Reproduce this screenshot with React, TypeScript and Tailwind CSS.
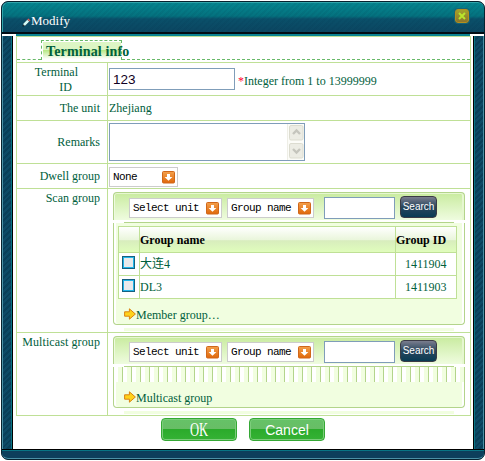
import type { ReactNode } from "react";

const serif = "font-['Liberation_Serif','Noto_Sans_CJK_SC',serif]";

function Pencil() {
  return (
    <svg className="mt-[15px] h-[9px] w-[9px] shrink-0" viewBox="0 0 9 9">
      <path d="M1 8 L1.4 5.4 L5.2 1.6 L7.4 3.6 L3.6 7.4 Z" fill="#d4fbf6" stroke="#123" strokeWidth=".4" />
      <path d="M5.4 1.5 L6.4 .5 L8.5 2.5 L7.5 3.5 Z" fill="#e0605a" />
      <path d="M.6 8.4 L1 6.8 L2.3 8 Z" fill="#111" />
    </svg>
  );
}

function DropIcon() {
  return (
    <svg className="h-[13px] w-[13px] shrink-0" viewBox="0 0 13 13">
      <defs>
        <linearGradient id="drop" x1="0" y1="0" x2="0" y2="1">
          <stop offset="0" stopColor="#f3a04c" />
          <stop offset="1" stopColor="#e0680a" />
        </linearGradient>
      </defs>
      <rect x=".5" y=".5" width="12" height="11.5" rx="1" fill="url(#drop)" stroke="#d0671a" />
      <path d="M5 3h3v3h2.4L6.5 9.8 2.6 6H5z" fill="#fff" />
    </svg>
  );
}

function GoArrow() {
  return (
    <svg className="h-[12px] w-[12px] shrink-0" viewBox="0 0 12 12">
      <path d="M.6 3.8H5.4V.8L11.4 6 5.4 11.2V8.2H.6z" fill="#ffd21c" stroke="#d98213" strokeWidth="1" />
    </svg>
  );
}

function Select({ label, width }: { label: string; width: string }) {
  return (
    <div className={`flex h-[20px] items-center justify-between border border-[#ccc] bg-white pr-[2px] pl-[3px] ${width}`}>
      <span className="font-['Liberation_Mono',monospace] text-[11px] leading-[18px] tracking-[-0.6px] whitespace-pre text-black">{label}</span>
      <DropIcon />
    </div>
  );
}

function Row({ label, height, children, labelClass = "" }: { label: ReactNode; height: string; children: ReactNode; labelClass?: string }) {
  return (
    <div className={`flex border-b border-[#bfe096] ${height}`}>
      <div className={`w-[91px] shrink-0 border-r border-[#bfe096] pr-[7px] text-right leading-[14px] whitespace-nowrap ${labelClass}`}>{label}</div>
      <div className="min-w-0 flex-1">{children}</div>
    </div>
  );
}

function Filter() {
  return (
    <div className="flex h-[28px] rounded-t-[4px] border border-b-0 border-[#b3d48b] bg-linear-to-b from-[#c9eb9f] to-[#effcdf] pl-[15px] shadow-[inset_0_1px_0_#e6f7d0,inset_1px_0_0_#eefadf,inset_-2px_0_0_#e6f7d0]">
      <div className="mt-[5px] flex">
        <Select label="Select unit" width="w-[93px]" />
        <div className="w-[5px]" />
        <Select label="Group name" width="w-[87px]" />
      </div>
      <div className="mt-[4px] ml-[10px] h-[22px] w-[71px] border border-[#7f9db9] bg-white" />
      <div className="mt-[3px] ml-[5px] h-[22px] w-[37px] rounded-[4px] border border-[#3b3b45] bg-linear-to-b from-[#7a7d8e] via-[#27465c] to-[#073b54] text-center font-['Liberation_Sans',sans-serif] text-[10px] leading-[19px] text-white">
        Search
      </div>
    </div>
  );
}

function MoreLink({ children }: { children: ReactNode }) {
  return (
    <div className="flex">
      <GoArrow />
      <span className="leading-[14px]">{children}</span>
    </div>
  );
}

function GroupRow({ name, id }: { name: string; id: string }) {
  return (
    <div className="flex h-[23px] border-b border-[#bfe096] bg-white">
      <div className="w-[21px] border-r border-[#bfe096] pt-[3px] pl-[3px]">
        <div className="h-[13px] w-[13px] border border-[#17607f] bg-[#e9e9eb] shadow-[inset_0_0_0_1px_#22b5ea]" />
      </div>
      <div className="w-[256px] border-r border-[#bfe096] pt-[4px] leading-[14px]">{name}</div>
      <div className="flex-1 pt-[4px] pl-[9px] leading-[14px]">{id}</div>
    </div>
  );
}

function GreenButton({ children }: { children: ReactNode }) {
  return (
    <div className="flex h-[23px] w-[76px] items-center justify-center rounded-[4px] border border-[#35a835] bg-[linear-gradient(#65c267_0%,#68bd66_48%,#2bab2b_50%,#35b235_100%)] text-white shadow-[inset_0_0_0_1px_#7ccd7b]">
      {children}
    </div>
  );
}

export default function App() {
  return (
    <div className={`h-[461px] w-[485px] overflow-hidden bg-white pt-px pl-px text-[12px] text-[#00603c] ${serif}`}>
      <div className="h-[459px] w-[484px] overflow-hidden rounded-[7px] border border-[#07222f] bg-[#0d4560]">
        <div className="flex h-[30px] rounded-t-[6px] border-t border-l border-[#31a5ab] bg-[repeating-linear-gradient(135deg,#0000_0_2px,#00264012_2px_4px),linear-gradient(#05858f_0%,#04717e_45%,#0a506a_55%,#0b4661_100%)] pl-[19px]">
          <Pencil />
          <span className="mt-[10px] text-[13px] leading-[16px] text-white">Modify</span>
          <div className="mt-[6px] ml-auto mr-[15px] flex h-[14px] w-[14px] items-center justify-center rounded-[3px] border border-[#b58f1e] bg-linear-to-b from-[#a3a32a] to-[#8b752d] shadow-[0_0_0_1px_#176375]">
            <svg width="8" height="8" viewBox="0 0 8 8" stroke="#b9e52c" strokeWidth="2">
              <path d="M1 1 7 7M7 1 1 7" />
            </svg>
          </div>
        </div>
        <div className="h-[2px] bg-[#020c14]" />
        <div className="flex h-[2px]">
          <div className="w-[14px] bg-white" />
          <div className="flex-1 bg-[#098391]" />
          <div className="w-[14px] bg-white" />
        </div>
        <div className="flex h-[413px]">
          <div className="w-[10px] border-r border-l border-r-[#087584] border-l-[#4b91a6] bg-[repeating-linear-gradient(135deg,#0d4a66_0_2px,#093f59_2px_4px)]" />
          <div className="w-px bg-black" />
          <div className="w-[460px] bg-white">
            <div className="ml-[3px] w-[455px] border border-b-0 border-[#bfe096]">
              <div className="flex h-[26px] border-b border-[#bfe096]">
                <div className="mt-[3px] h-[20px] w-[24px] border-b border-dashed border-[#68b968]" />
                <div className="mt-[3px] h-[20px] w-[81px] border border-b-0 border-dashed border-[#68b968] bg-[linear-gradient(#ddf6c5_0%,#dcf5c4_45%,#b9e888_50%,#fff_95%)] bg-clip-content pt-px pl-px">
                  <div className="h-[18px] pt-px pl-[3px] text-[14px] leading-[18px] font-bold tracking-[0.15px] whitespace-nowrap">Terminal info</div>
                </div>
                <div className="mt-[3px] h-[20px] flex-1 border-b border-dashed border-[#68b968]" />
              </div>
              <Row
                height="h-[33px]"
                labelClass="pt-[2px]"
                label={
                  <>
                    <div className="pr-[22px]">Terminal</div>
                    <div className="mt-[1px] pr-[28px]">ID</div>
                  </>
                }
              >
                <div className="flex pt-[5px] pl-px">
                  <div className="h-[22px] w-[126px] border border-[#7f9db9] bg-white pl-[3px] font-['Liberation_Sans',sans-serif] text-[13.5px] leading-[21px] text-[#102]">123</div>
                  <span className="mt-[6px] ml-[3px] leading-[14px]">
                    <span className="text-[#f03]">*</span>Integer from 1 to 13999999
                  </span>
                </div>
              </Row>
              <Row height="h-[25px]" labelClass="pt-[5px]" label="The unit">
                <div className="pt-[5px] pl-px leading-[14px]">Zhejiang</div>
              </Row>
              <Row height="h-[43px]" labelClass="pt-[14px]" label="Remarks">
                <div className="mt-[2px] ml-px flex h-[38px] w-[196px] justify-end border border-[#7f9db9] bg-white">
                  <div className="flex w-[17px] flex-col items-center justify-between border-l border-[#eeeee6] bg-[#fcfcf8] py-px">
                    {["M4 9 7.5 5.5 11 9", "M4 6 7.5 9.5 11 6"].map((d) => (
                      <svg key={d} width="15" height="16" viewBox="0 0 15 16">
                        <rect x=".5" y=".5" width="13.5" height="14.5" rx="1.5" fill="#ecece4" stroke="#dcdcd0" />
                        <path d={d} fill="none" stroke="#c5c5bd" strokeWidth="2.4" />
                      </svg>
                    ))}
                  </div>
                </div>
              </Row>
              <Row height="h-[25px]" labelClass="pt-[5px]" label="Dwell group">
                <div className="pt-[3px] pl-px">
                  <Select label="None" width="w-[69px]" />
                </div>
              </Row>
              <Row height="h-[144px]" labelClass="pt-[2px]" label="Scan group">
                <div className="mt-[3px] ml-[5px] w-[352px]">
                  <Filter />
                  <div className="mx-[11px] mt-[2px] h-px bg-[#b3d48b]" />
                  <div className="h-[102px] rounded-b-[4px] border border-t-0 border-[#b3d48b] bg-[#f1fee0] px-[4px] pt-[3px] shadow-[inset_2px_0_0_#fff,inset_-2px_0_0_#fff]">
                    <div className="w-[339px] border border-b-0 border-[#bfe096]">
                      <div className="flex h-[26px] border-b border-[#bfe096] bg-[linear-gradient(#fff_0%,#eaf6dc_50%,#d8edbd_55%,#e0fdbc_100%)] leading-[14px] font-bold text-black">
                        <div className="w-[21px] border-r border-[#bfe096]" />
                        <div className="w-[256px] border-r border-[#bfe096] pt-[6px]">Group name</div>
                        <div className="pt-[6px]">Group ID</div>
                      </div>
                      <GroupRow name="大连4" id="1411904" />
                      <GroupRow name="DL3" id="1411903" />
                    </div>
                    <div className="mt-[9px] ml-[6px]">
                      <MoreLink>Member group…</MoreLink>
                    </div>
                  </div>
                  <div className="mx-[11px] mt-[3px] h-[3px] bg-[#f1fee0]" />
                </div>
              </Row>
              <Row height="h-[83px]" labelClass="pt-[2px] tracking-[0.1px]" label="Multicast group">
                <div className="mt-[3px] ml-[5px] w-[352px]">
                  <Filter />
                  <div className="mx-[11px] mt-[2px] h-px bg-[#b3d48b]" />
                  <div className="h-[41px] rounded-b-[4px] border border-t-0 border-[#b3d48b] bg-[#f1fee0] shadow-[inset_2px_0_0_#fff,inset_-2px_0_0_#fff]">
                    <div className="-mx-px h-[15px] bg-[repeating-linear-gradient(90deg,#b3d48b_0_1px,#fff_1px_5px,#f1fee0_5px_9px)]" />
                    <div className="mt-[9px] ml-[10px]">
                      <MoreLink>Multicast group</MoreLink>
                    </div>
                  </div>
                  <div className="mx-[11px] mt-[3px] h-[3px] bg-[#f1fee0]" />
                </div>
              </Row>
            </div>
            <div className="flex gap-[12px] pt-[2px] pl-[148px]">
              <GreenButton>
                <span className="scale-x-[0.7] text-[18px] leading-[20px]">OK</span>
              </GreenButton>
              <GreenButton>
                <span className="font-['Liberation_Sans',sans-serif] text-[14px] leading-[20px]">Cancel</span>
              </GreenButton>
            </div>
          </div>
          <div className="w-px bg-black" />
          <div className="flex-1 border-r border-l border-r-[#4b91a6] border-l-[#087584] bg-[repeating-linear-gradient(135deg,#0d4a66_0_2px,#093f59_2px_4px)]" />
        </div>
        <div className="h-px bg-black" />
        <div className="h-[9px] rounded-b-[6px] border-t border-b border-t-[#087584] border-b-[#4b91a6] bg-[#0d3f5c]" />
      </div>
    </div>
  );
}
